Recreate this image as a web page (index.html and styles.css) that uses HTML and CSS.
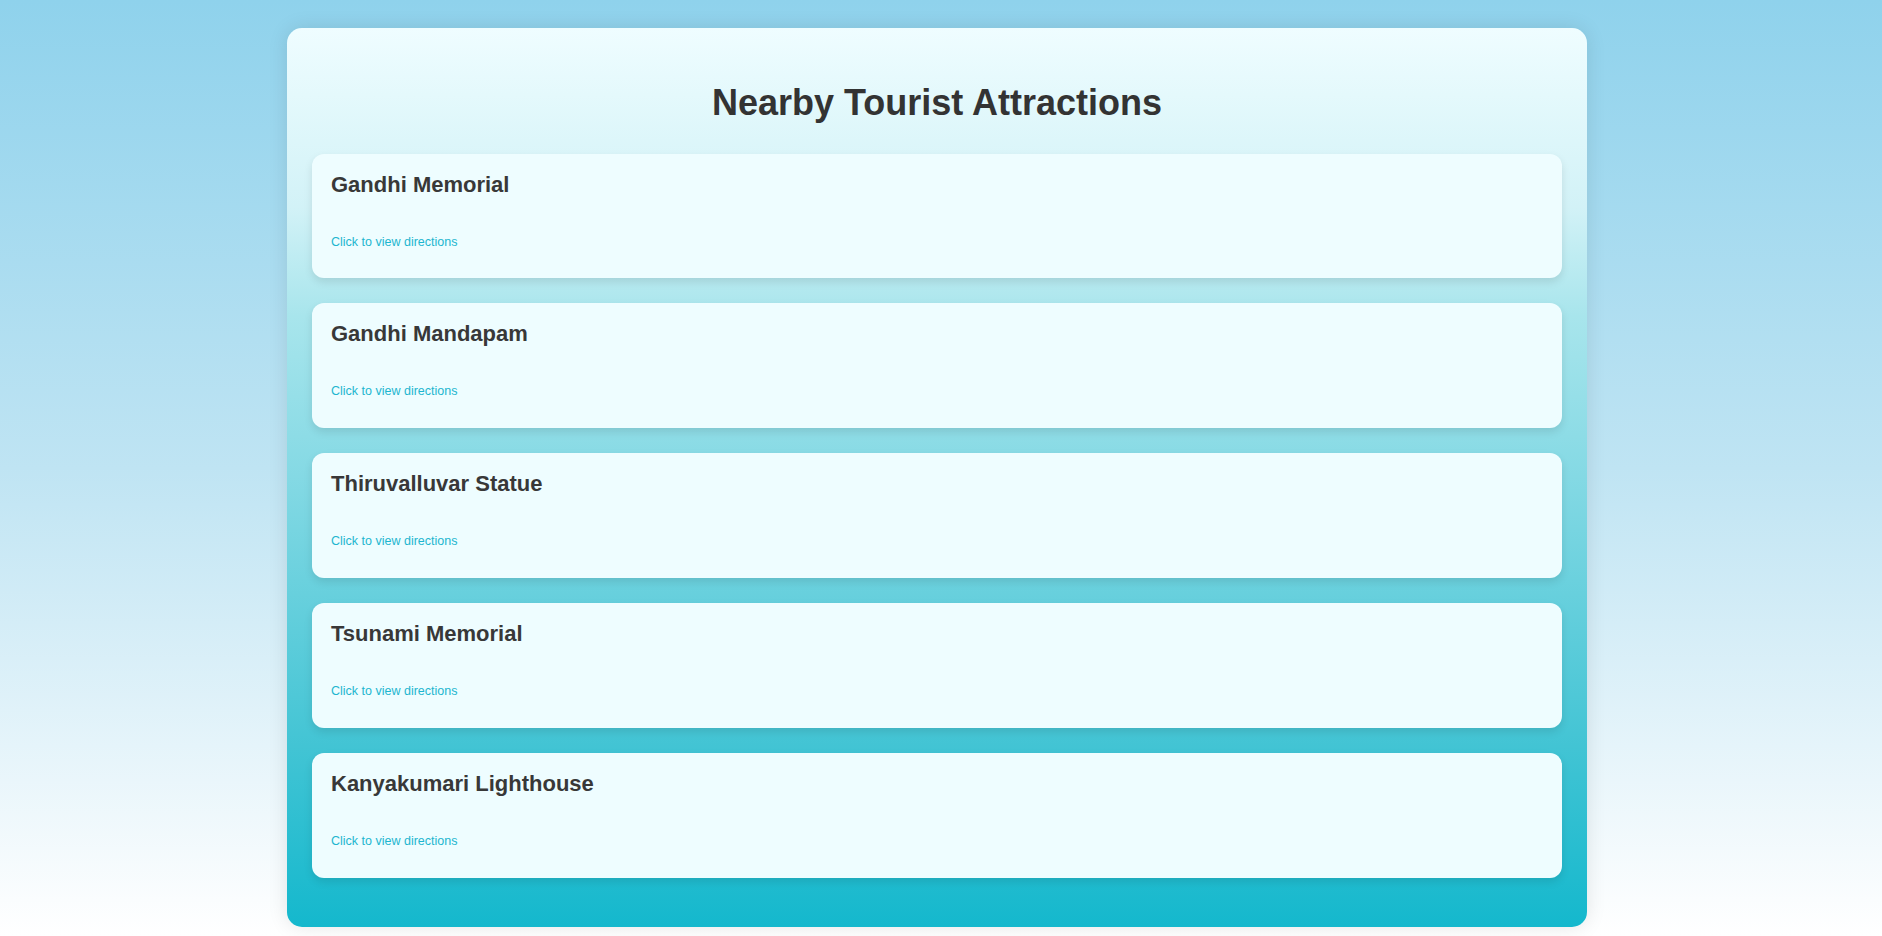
FILE: index.html
```html
<!DOCTYPE html>
<html lang="en">
<head>
<meta charset="utf-8">
<title>Nearby Tourist Attractions</title>
<link rel="stylesheet" href="styles.css">
</head>
<body>
<div class="page">
  <main class="panel">
    <h1 class="panel-title">Nearby Tourist Attractions</h1>
    <div class="card">
      <h3 class="card-title">Gandhi Memorial</h3>
      <p class="card-link"><a href="#">Click to view directions</a></p>
    </div>
    <div class="card">
      <h3 class="card-title">Gandhi Mandapam</h3>
      <p class="card-link"><a href="#">Click to view directions</a></p>
    </div>
    <div class="card">
      <h3 class="card-title">Thiruvalluvar Statue</h3>
      <p class="card-link"><a href="#">Click to view directions</a></p>
    </div>
    <div class="card">
      <h3 class="card-title">Tsunami Memorial</h3>
      <p class="card-link"><a href="#">Click to view directions</a></p>
    </div>
    <div class="card">
      <h3 class="card-title">Kanyakumari Lighthouse</h3>
      <p class="card-link"><a href="#">Click to view directions</a></p>
    </div>
  </main>
</div>
</body>
</html>
```
FILE: styles.css
```css
html, body {
  margin: 0;
  padding: 0;
}
body {
  font-family: "Liberation Sans", Arial, sans-serif;
  min-height: 936px;
  background: linear-gradient(to bottom, #8fd2ec 0%, #bfe4f3 50%, #ffffff 100%);
  overflow: hidden;
}
.page {
  padding: 28px 8px 9px 0;
}
.panel {
  width: 1300px;
  box-sizing: border-box;
  margin: 0 auto;
  padding: 25px;
  border-radius: 15px;
  background: linear-gradient(to bottom, #effdff 0%, #d2f2f7 20%, #a8e5ec 32%, #84d9e4 50%, #42c4d4 80%, #14b8cd 100%);
  box-shadow: 0 0 20px rgba(0, 0, 0, 0.1);
}
.panel-title {
  margin: 29px 0 29.6px;
  font-size: 36px;
  font-weight: bold;
  text-align: center;
  color: #333333;
}
.card {
  background: #eefdff;
  border-radius: 12px;
  padding: 18px 19px;
  margin-bottom: 25px;
  box-shadow: 0 4px 8px rgba(0, 0, 0, 0.1);
}
.card:last-child {
  margin-bottom: 24px;
}
.card-title {
  margin: 0;
  font-size: 22px;
  font-weight: bold;
  color: #383838;
}
.card-link {
  margin: 37px 0 11.8px;
  font-size: 12.5px;
}
.card-link a {
  color: #1db6cf;
  text-decoration: none;
}
```
